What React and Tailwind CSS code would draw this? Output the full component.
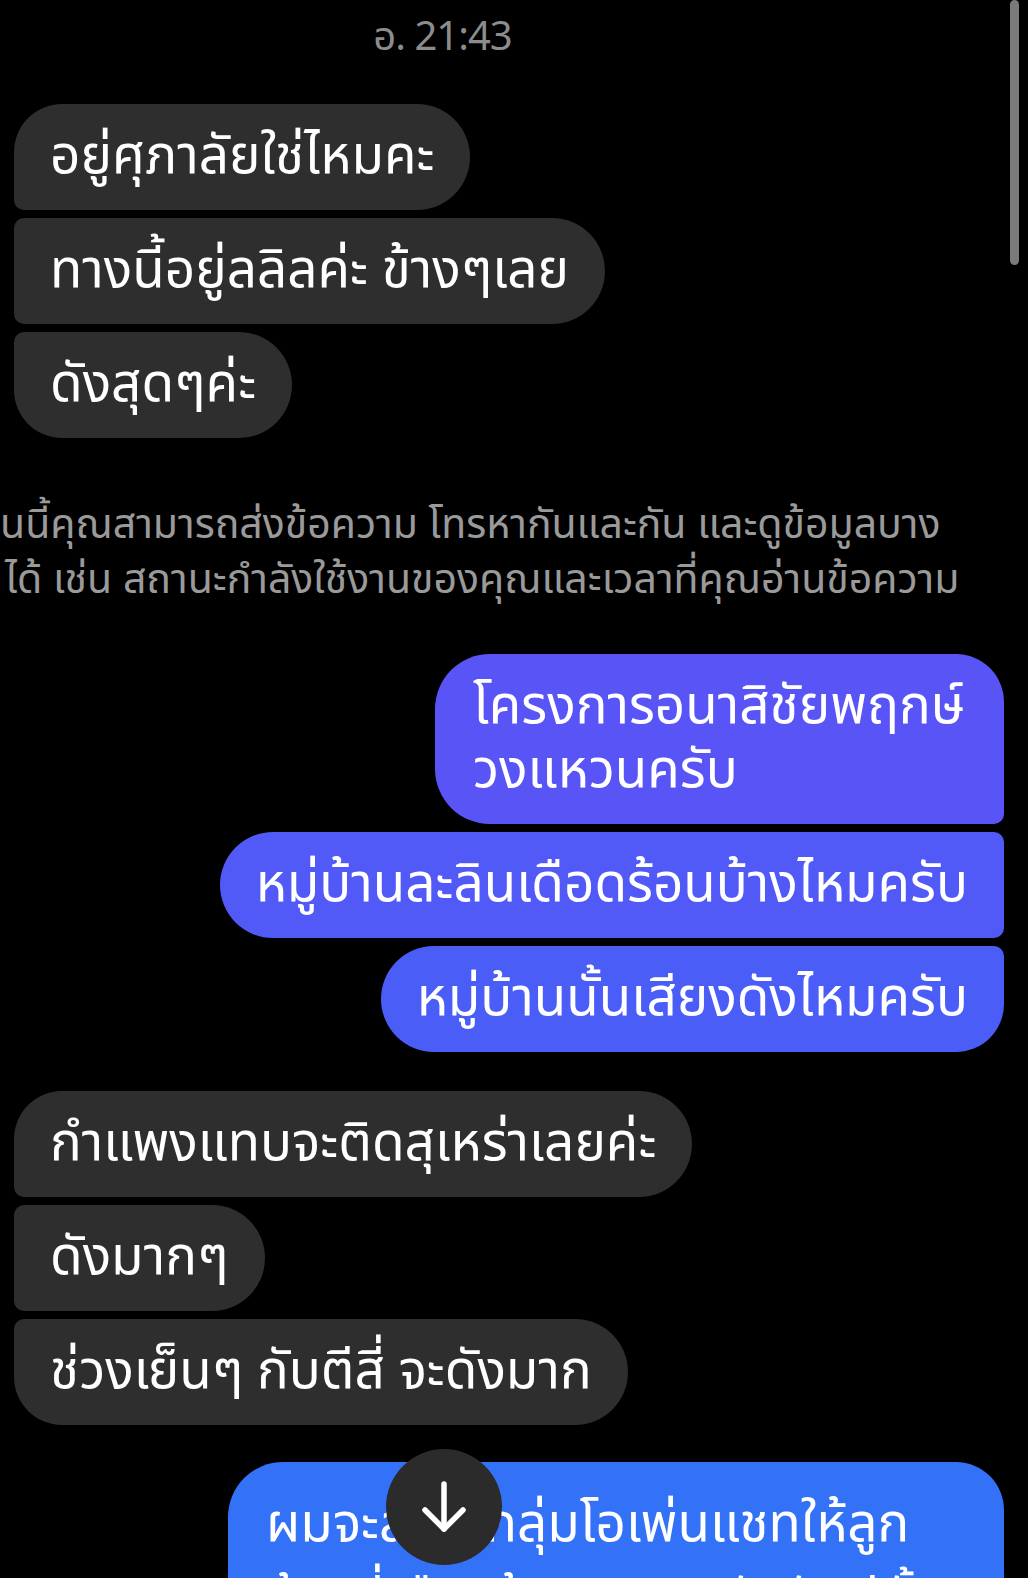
const font = { fontFamily: '"Noto Sans Thai", "Noto Sans", "Liberation Sans", sans-serif' };

function Bubble({ side, color, corners, children, className = "" }) {
  const base =
    side === "left"
      ? "bg-[#2e2e2e] text-white"
      : `${color} text-white`;
  return (
    <div
      className={`${base} ${corners} ${className} px-[36px] py-[21px] text-[53px] leading-[64px] whitespace-nowrap`}
    >
      {children}
    </div>
  );
}

export default function App() {
  return (
    <div
      className="relative w-full h-[1578px] overflow-hidden bg-black flex flex-col"
      style={font}
    >
      <div className="pt-[16px] pr-[143px] text-center text-[40px] leading-[44px] text-[#8c8c8c] tracking-tight">
        อ. 21:43
      </div>

      <div className="mt-[44px] flex flex-col items-start gap-[8px] pl-[14px]">
        <Bubble side="left" corners="rounded-tl-[48px] rounded-bl-[10px] rounded-r-[53px]">
          อยู่ศุภาลัยใช่ไหมคะ
        </Bubble>
        <Bubble side="left" corners="rounded-l-[10px] rounded-r-[53px]">
          ทางนี้อยู่ลลิลค่ะ ข้างๆเลย
        </Bubble>
        <Bubble side="left" corners="rounded-tl-[10px] rounded-bl-[48px] rounded-r-[53px]">
          ดังสุดๆค่ะ
        </Bubble>
      </div>

      <div className="mt-[60px] text-[41px] leading-[55px] text-[#9a9a9a] whitespace-nowrap">
        <div>นนี้คุณสามารถส่งข้อความ โทรหากันและกัน และดูข้อมูลบาง</div>
        <div className="pl-[5px]">ได้ เช่น สถานะกำลังใช้งานของคุณและเวลาที่คุณอ่านข้อความ</div>
      </div>

      <div className="mt-[46px] flex flex-col items-end gap-[8px] pr-[24px]">
        <Bubble
          side="right"
          color="bg-[#5954f6]"
          corners="rounded-l-[55px] rounded-tr-[48px] rounded-br-[10px]"
          className="w-[569px] !px-[38px]"
        >
          โครงการอนาสิชัยพฤกษ์
          <br />
          วงแหวนครับ
        </Bubble>
        <Bubble
          side="right"
          color="bg-[#5159f6]"
          corners="rounded-l-[53px] rounded-r-[10px]"
        >
          หมู่บ้านละลินเดือดร้อนบ้างไหมครับ
        </Bubble>
        <Bubble
          side="right"
          color="bg-[#4a5ef7]"
          corners="rounded-l-[53px] rounded-tr-[10px] rounded-br-[48px]"
        >
          หมู่บ้านนั้นเสียงดังไหมครับ
        </Bubble>
      </div>

      <div className="mt-[39px] flex flex-col items-start gap-[8px] pl-[14px]">
        <Bubble side="left" corners="rounded-tl-[48px] rounded-bl-[10px] rounded-r-[53px]">
          กำแพงแทบจะติดสุเหร่าเลยค่ะ
        </Bubble>
        <Bubble side="left" corners="rounded-l-[10px] rounded-r-[53px]">
          ดังมากๆ
        </Bubble>
        <Bubble side="left" corners="rounded-tl-[10px] rounded-bl-[48px] rounded-r-[53px]">
          ช่วงเย็นๆ กับตีสี่ จะดังมาก
        </Bubble>
      </div>

      <div className="mt-[37px] flex flex-col items-end pr-[24px]">
        <Bubble
          side="right"
          color="bg-[#3371f7]"
          corners="rounded-l-[55px] rounded-tr-[48px] rounded-br-[10px]"
          className="w-[776px] !px-[38px] !pt-[25px] !leading-[76px]"
        >
          ผมจะสร้างกลุ่มโอเพ่นแชทให้ลูก
          <br />
          บ้านที่เดือดร้อนมารวมตัวกันดีมั้ย
        </Bubble>
      </div>

      <div className="absolute right-[9px] top-0 h-[265px] w-[9px] rounded-full bg-[#7a7a7a]" />

      <div className="absolute left-[386px] top-[1449px] flex h-[116px] w-[116px] items-center justify-center rounded-full bg-[#2b2b2b]">
        <svg width="46" height="52" viewBox="0 0 46 52" fill="none" stroke="white" strokeWidth="5.5" strokeLinecap="round" strokeLinejoin="round">
          <path d="M23 3v45" />
          <path d="M4 29l19 19 19-19" />
        </svg>
      </div>
    </div>
  );
}
